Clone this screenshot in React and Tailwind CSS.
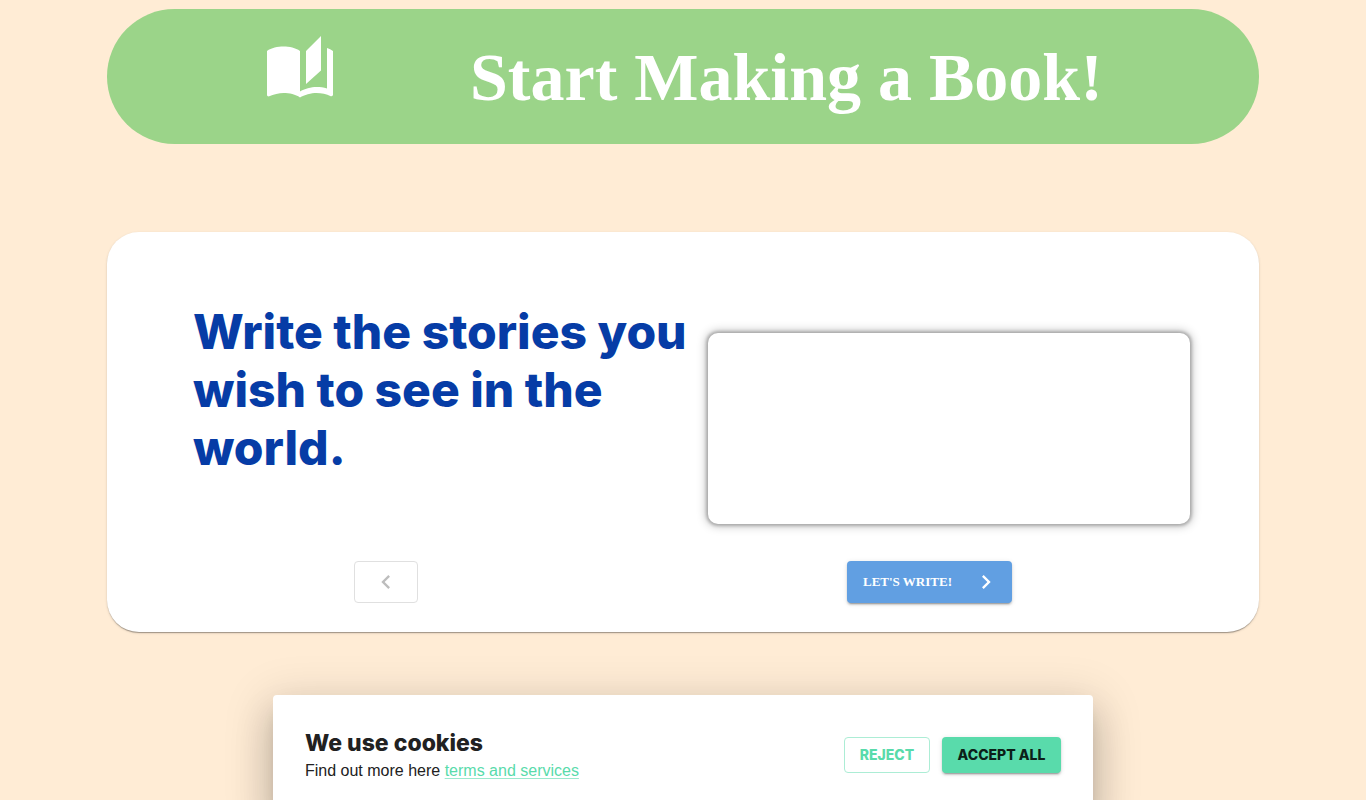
import { MdAutoStories, MdChevronLeft, MdChevronRight } from "react-icons/md";

export default function App() {
  return (
    <div className="min-h-screen bg-[#ffecd5] font-['Liberation_Sans',sans-serif] text-[#212121]">
      <main className="mx-auto max-w-[1152px] pt-[9px]">
        <header className="flex h-[135px] items-center gap-[134px] rounded-full bg-[#9bd489] pl-[157px] text-white">
          <MdAutoStories className="mb-4 size-[72px] shrink-0" />
          <h1 className="font-['Liberation_Serif',serif] text-[68px] leading-none font-bold whitespace-nowrap">
            Start Making a Book!
          </h1>
        </header>

        <section className="mt-[88px] h-[400px] rounded-[32px] bg-white pr-[69px] pl-[86px] shadow-[0_2px_1px_-1px_rgba(0,0,0,0.2),0_1px_1px_0_rgba(0,0,0,0.14),0_1px_3px_0_rgba(0,0,0,0.12)]">
          <div className="flex h-[329px] items-start justify-between">
            <h2 className="mt-[71px] w-[510px] font-['Inter',sans-serif] text-[48px] leading-[58px] font-extrabold text-[#063ca6]">
              Write the stories you wish to see in the world.
            </h2>
            <div className="mt-[101px] h-[191px] w-[482px] shrink-0 rounded-[10px] bg-white shadow-[0_0_3px_2px_rgba(0,0,0,0.2),0_0_10px_2px_rgba(0,0,0,0.25)]" />
          </div>
          <div className="flex">
            <button type="button" disabled aria-label="Previous" className="ml-[161px] flex h-[42px] w-16 items-center justify-center rounded border border-[#e0e0e0] text-[#bdbdbd]">
              <MdChevronLeft className="size-7" />
            </button>
            <button type="button" className="ml-[429px] flex h-[42px] w-[165px] items-center justify-between rounded bg-[#619fe2] pr-3 pl-4 font-['Liberation_Serif',serif] text-[13px] font-bold text-white shadow-[0_3px_1px_-2px_rgba(0,0,0,0.2),0_2px_2px_0_rgba(0,0,0,0.14),0_1px_5px_0_rgba(0,0,0,0.12)]">
              LET'S WRITE!
              <MdChevronRight className="size-7" />
            </button>
          </div>
        </section>
      </main>

      <aside aria-label="Cookie consent" className="mx-auto mt-[63px] flex h-[120px] max-w-[820px] items-center justify-between rounded bg-white px-8 shadow-[0_11px_15px_-7px_rgba(0,0,0,0.2),0_24px_38px_3px_rgba(0,0,0,0.14),0_9px_46px_8px_rgba(0,0,0,0.12)]">
        <div>
          <h3 className="font-['Inter',sans-serif] text-[23px] leading-8 font-extrabold">We use cookies</h3>
          <p className="text-base">
            Find out more here{" "}
            <a href="#terms" className="text-[#59dbab] underline decoration-[#59dbab]/60 decoration-1 underline-offset-2">terms and services</a>
          </p>
        </div>
        <div className="flex gap-3 font-['Inter',sans-serif] text-sm font-extrabold">
          <button type="button" className="h-9 w-[86px] rounded border border-[#acedd5] text-[#59dbab]">REJECT</button>
          <button type="button" className="h-9 w-[119px] rounded bg-[#59dbab] text-[#0c1f18] shadow-[0_3px_1px_-2px_rgba(0,0,0,0.2),0_2px_2px_0_rgba(0,0,0,0.14),0_1px_5px_0_rgba(0,0,0,0.12)]">ACCEPT ALL</button>
        </div>
      </aside>
    </div>
  );
}
